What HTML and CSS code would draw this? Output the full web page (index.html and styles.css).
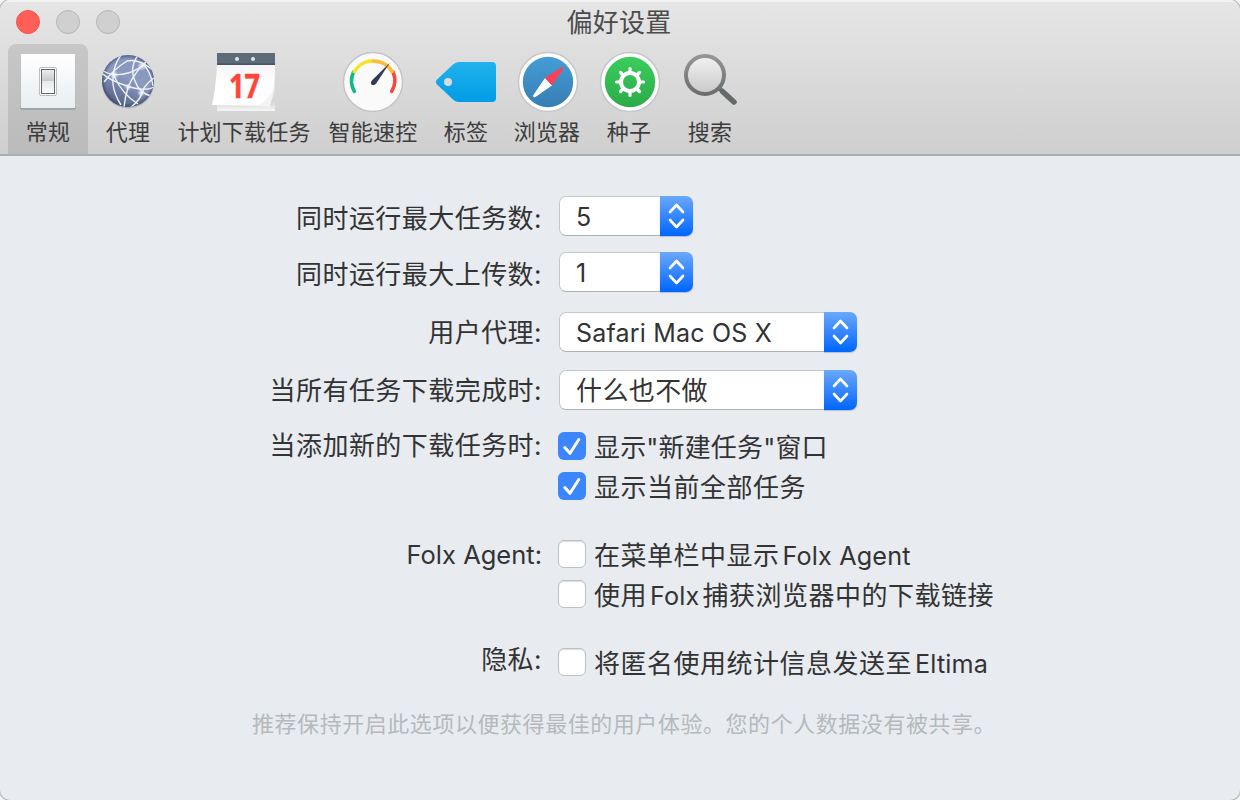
FILE: index.html
```html
<!DOCTYPE html>
<html lang="zh-CN">
<head>
<meta charset="utf-8">
<title>偏好设置</title>
<link rel="stylesheet" href="styles.css">
</head>
<body>
<div class="window">
  <header class="head">
    <div class="titlebar">
      <div class="lights"><i class="light close"></i><i class="light"></i><i class="light"></i></div>
      <h1 class="title">偏好设置</h1>
    </div>
    <nav class="toolbar">
      <div class="tool selected">
        <svg class="icon" width="60" height="60" viewBox="18 52 60 60">
          <defs>
            <linearGradient id="plate" x2="0" y2="1"><stop stop-color="#fff"/><stop offset="1" stop-color="#e9eef1"/></linearGradient>
            <linearGradient id="rocker" x2="0" y2="1"><stop stop-color="#eceeef"/><stop offset=".48" stop-color="#c5cacd"/><stop offset=".5" stop-color="#e6e9eb"/><stop offset="1" stop-color="#fafbfb"/></linearGradient>
          </defs>
          <rect x="20.5" y="55" width="55" height="54.500" rx="1.5" fill="#858a8e"/>
          <rect x="20.7" y="54" width="54.6" height="54.3" rx="1.5" fill="url(#plate)"/>
          <rect x="39.5" y="67.5" width="17" height="28" rx="1.5" fill="#fff" stroke="#bdbdbd"/>
          <rect x="41.5" y="69.5" width="13" height="24" fill="url(#rocker)" stroke="#666" stroke-width="1"/>
        </svg>
        <span class="name">常规</span>
      </div>
      <div class="tool">
        <svg class="icon" width="60" height="60" viewBox="98 52 60 60">
          <defs>
            <linearGradient id="globe" x1=".75" x2=".25" y2="1"><stop stop-color="#8595bd"/><stop offset=".45" stop-color="#8c9abf"/><stop offset="1" stop-color="#4f5d82"/></linearGradient>
            <radialGradient id="rim"><stop offset=".85" stop-color="#2d3a5c" stop-opacity="0"/><stop offset="1" stop-color="#2d3a5c" stop-opacity=".55"/></radialGradient>
            <radialGradient id="spark"><stop stop-color="#fff"/><stop offset="1" stop-color="#dfe9ff" stop-opacity="0"/></radialGradient>
            <clipPath id="ball"><circle cx="128" cy="81" r="26"/></clipPath>
          </defs>
          <ellipse cx="128" cy="82.500" rx="26" ry="26" fill="#a5a7aa" opacity=".7"/>
          <circle cx="128" cy="81" r="26" fill="url(#globe)"/>
          <circle cx="128" cy="81" r="26" fill="url(#rim)"/>
          <g clip-path="url(#ball)" fill="none" stroke="#eef2fa" stroke-width="1.400">
            <path d="M103 71Q114 77 128 73Q139 70 146 62"/>
            <path d="M103 74Q109 80 127 86T154 87"/>
            <path d="M121 55Q112 67 113 84Q114 94 121 105"/>
            <path d="M104 82Q114 69 127 61Q139 58 154 71"/>
            <path d="M138 55Q129 68 135 81Q139 93 151 96"/>
            <path d="M143 64Q151 72 153 86"/>
            <path d="M128 88Q125 97 124 107"/>
            <path d="M128 87Q134 74 142 66"/>
            <path d="M114 76Q123 95 138 104"/>
            <path d="M130 108Q141 100 144 88Q149 81 154 78"/>
          </g>
          <circle cx="114" cy="75" r="5" fill="url(#spark)"/><circle cx="142" cy="66" r="5" fill="url(#spark)"/><circle cx="128" cy="87" r="4" fill="url(#spark)"/><circle cx="141" cy="93" r="4" fill="url(#spark)"/>
        </svg>
        <span class="name">代理</span>
      </div>
      <div class="tool w152">
        <svg class="icon" width="64" height="60" viewBox="212 52 64 60">
          <defs>
            <linearGradient id="page" x2="0" y2="1"><stop stop-color="#f4f4f4"/><stop offset=".4" stop-color="#fefefe"/><stop offset="1" stop-color="#fff"/></linearGradient>
            <linearGradient id="under" x2="0" y2="1"><stop stop-color="#efefef"/><stop offset=".8" stop-color="#d5d5d5"/><stop offset="1" stop-color="#f7f7f7"/></linearGradient>
          </defs>
          <path d="M217 64H275V111H217Z" fill="url(#under)"/>
          <path d="M217 64H275Q275 94 269 107Q267 105 212 105Q216 87 217 64Z" fill="url(#page)"/>
          <path d="M275 85Q273 98 269 107Q267 105 258 105Q269 101 275 85Z" fill="#f3f3f3"/>
          <rect x="217" y="53" width="58" height="12" fill="#5d6b78"/>
          <rect x="217" y="63.5" width="58" height="1.3" fill="#414e65"/>
          <circle cx="237" cy="59" r="2" fill="#e4e5e6"/><circle cx="253" cy="59" r="2" fill="#e4e5e6"/>
          <text class="day" x="229" y="98" textLength="31" lengthAdjust="spacingAndGlyphs">17</text>
        </svg>
        <span class="name">计划下载任务</span>
      </div>
      <div class="tool w106">
        <svg class="icon round" width="62" height="62" viewBox="342 51 62 62">
          <circle cx="373" cy="82" r="29.5" fill="#fafafa" stroke="#c4c4c4" stroke-width="1.4"/>
          <g fill="none" stroke-width="3.6">
            <path d="M354.3 91.4A21.5 21.5 0 0 1 353.4 72.2" stroke="#10b98a" stroke-linecap="round"/>
            <path d="M391.7 91.4A21.5 21.5 0 0 0 393.2 72.2" stroke="#fb463c" stroke-linecap="round"/>
            <path d="M353.7 73A21.2 21.2 0 0 1 372 61" stroke="#f7e421"/>
            <path d="M372 61A21.2 21.2 0 0 1 392.7 73" stroke="#fdbb30"/>
          </g>
          <path d="M390 62.5L376 83.8Q373.4 86.3 371.4 84.4Q370 82.6 372.4 80Z" fill="#313e52"/>
        </svg>
        <span class="name">智能速控</span>
      </div>
      <div class="tool">
        <svg class="icon" width="62" height="60" viewBox="435 52 62 60">
          <defs><linearGradient id="tag" x2="0" y2="1"><stop stop-color="#22b2ec"/><stop offset="1" stop-color="#009ce6"/></linearGradient></defs>
          <path fill-rule="evenodd" d="M436.5 80L453 64.5Q455.500 62 459 62H492Q496 62 496 66V98Q496 102 492 102H459Q455.500 102 453 99.500L436.500 84Q435.200 82 436.500 80ZM452 82A4 4 0 1 0 444 82A4 4 0 1 0 452 82Z" fill="url(#tag)"/>
        </svg>
        <span class="name">标签</span>
      </div>
      <div class="tool w82">
        <svg class="icon round nudge" width="62" height="62" viewBox="517 51 62 62">
          <defs><linearGradient id="sky" x2="0" y2="1"><stop stop-color="#459dd5"/><stop offset="1" stop-color="#367eb4"/></linearGradient></defs>
          <circle cx="548" cy="82" r="29.5" fill="#fff" stroke="#c6c8ca" stroke-width="1.5"/>
          <circle cx="548" cy="82" r="25.2" fill="url(#sky)"/>
          <path d="M545 78L533.200 95.300Q532.500 98.200 535.400 97L552 85.500Z" fill="#fff"/>
          <path d="M545 78L561.500 67.200Q564.300 66.200 563.200 69L552 85.500Z" fill="#fe4056"/>
        </svg>
        <span class="name">浏览器</span>
      </div>
      <div class="tool w82">
        <svg class="icon round nudge" width="62" height="62" viewBox="599 51 62 62">
          <defs><linearGradient id="leaf" x2="0" y2="1"><stop stop-color="#3bcd5d"/><stop offset="1" stop-color="#2bab48"/></linearGradient></defs>
          <circle cx="630" cy="82" r="29.500" fill="#fff" stroke="#c6c8c7" stroke-width="1.500"/>
          <circle cx="630" cy="82" r="25.200" fill="url(#leaf)"/>
          <g fill="none" stroke="#fff">
            <circle cx="630" cy="82" r="9" stroke-width="4"/>
            <path d="M630 72V68.500M630 92V95.500M620 82H616.500M640 82H643.500M623 75L620.500 72.500M637 75L639.500 72.500M623 89L620.500 91.500M637 89L639.500 91.500" stroke-width="3.200" stroke-linecap="round"/>
          </g>
        </svg>
        <span class="name">种子</span>
      </div>
      <div class="tool">
        <svg class="icon" width="60" height="60" viewBox="680 52 60 60">
          <defs>
            <linearGradient id="lens" x2="0" y2="1"><stop stop-color="#f2f2f2"/><stop offset="1" stop-color="#c8c8c8"/></linearGradient>
            <linearGradient id="ring" x2="0" y2="1"><stop stop-color="#949494"/><stop offset="1" stop-color="#6b6d6f"/></linearGradient>
          </defs>
          <path d="M719.500 88.500L734.500 102.500" stroke="#66696b" stroke-width="4"/>
          <path d="M722.500 91.500L734 102" stroke="#66696b" stroke-width="5.500" stroke-linecap="round"/>
          <circle cx="705" cy="75" r="19" fill="url(#lens)" stroke="url(#ring)" stroke-width="4"/>
        </svg>
        <span class="name">搜索</span>
      </div>
    </nav>
  </header>

  <main class="form">
    <div class="row">
      <label class="label low">同时运行最大任务数:</label>
      <div class="select narrow"><span class="value">5</span><span class="arrows"><svg width="33" height="40" viewBox="0 0 33 40"><path class="chev" d="M10 16L16.500 9L23 16M10 24L16.500 31L23 24"/></svg></span></div>
    </div>
    <div class="row g16">
      <label class="label low">同时运行最大上传数:</label>
      <div class="select narrow"><span class="value">1</span><span class="arrows"><svg width="33" height="40" viewBox="0 0 33 40"><path class="chev" d="M10 16L16.500 9L23 16M10 24L16.500 31L23 24"/></svg></span></div>
    </div>
    <div class="row g20">
      <label class="label">用户代理:</label>
      <div class="select"><span class="value agent">Safari Mac OS X</span><span class="arrows"><svg width="33" height="40" viewBox="0 0 33 40"><path class="chev" d="M10 16L16.500 9L23 16M10 24L16.500 31L23 24"/></svg></span></div>
    </div>
    <div class="row g18">
      <label class="label">当所有任务下载完成时:</label>
      <div class="select"><span class="value zh">什么也不做</span><span class="arrows"><svg width="33" height="40" viewBox="0 0 33 40"><path class="chev" d="M10 16L16.500 9L23 16M10 24L16.500 31L23 24"/></svg></span></div>
    </div>
    <div class="row short g22">
      <label class="label high">当添加新的下载任务时:</label>
      <div class="option"><span class="box on"><svg width="28" height="28" viewBox="0 0 28 28"><path class="tick" d="M6.800 15.500L12 21.300L20.800 7.500"/></svg></span><span class="text tight">显示"新建任务"窗口</span></div>
    </div>
    <div class="row short g12">
      <span></span>
      <div class="option"><span class="box on"><svg width="28" height="28" viewBox="0 0 28 28"><path class="tick" d="M6.800 15.500L12 21.300L20.800 7.500"/></svg></span><span class="text">显示当前全部任务</span></div>
    </div>
    <div class="row short g40">
      <label class="label latin">Folx Agent:</label>
      <div class="option"><span class="box"></span><span class="text">在菜单栏中显示<span class="word">Folx Agent</span></span></div>
    </div>
    <div class="row short g12">
      <span></span>
      <div class="option"><span class="box"></span><span class="text">使用<span class="word">Folx</span><span class="after">捕获浏览器中的下载链接</span></span></div>
    </div>
    <div class="row short g40">
      <label class="label higher">隐私:</label>
      <div class="option"><span class="box"></span><span class="text">将匿名使用统计信息发送至<span class="word">Eltima</span></span></div>
    </div>
    <p class="note">推荐保持开启此选项以便获得最佳的用户体验。您的个人数据没有被共享。</p>
  </main>
</div>
</body>
</html>
```
FILE: styles.css
```css
* { box-sizing: border-box; }
body {
  margin: 0;
  background: #f4f5f6;
  color: #333;
  font-family: Inter, "Noto Sans CJK SC", sans-serif;
}
.window {
  width: 1240px;
  height: 800px;
  overflow: hidden;
  border-radius: 10px;
  background: #e8ecf1;
  box-shadow: 0 0 0 1px #b5b5b5;
}
.head {
  height: 156px;
  border-bottom: 2px solid #abadb0;
  background: linear-gradient(#e6e6e6, #cfcfcf);
  box-shadow: inset 0 2px 0 #f3f3f3;
}
.titlebar {
  display: grid;
  grid-template-columns: 1fr auto 1fr;
  height: 44px;
  align-items: center;
}
.lights { display: flex; gap: 16px; padding-left: 16px; }
.light {
  width: 24px;
  height: 24px;
  border: 1px solid #b4b4b4;
  border-radius: 50%;
  background: #d0d0d0;
}
.close { background: #ff5f57; border-color: #f2564e; }
.title {
  margin: 2px 2px 0 0;
  font-size: 26px;
  line-height: 32px;
  font-weight: 400;
  letter-spacing: .3px;
  color: #4b4b4b;
}
.toolbar { display: flex; height: 110px; padding-left: 8px; }
.tool {
  display: flex;
  flex-direction: column;
  align-items: center;
  width: 80px;
  padding-top: 8px;
}
.selected { background: linear-gradient(#c7c7c7, #bbb); border-radius: 8px 8px 0 0; }
.w152 { width: 152px; }
.w106 { width: 106px; }
.w82 { width: 82px; }
.icon { flex: none; height: 60px; overflow: visible; }
.round { height: 62px; margin: -1px 0; }
.nudge { margin-left: 2px; }
.name {
  margin-top: 6px;
  font-size: 22px;
  line-height: 28px;
  letter-spacing: .2px;
  white-space: nowrap;
  color: #3c3c3c;
}
.day { font: 700 34px "Open Sans", sans-serif; fill: #ff453a; stroke: #ff453a; stroke-width: .5px; }
.form { padding-top: 40px; font-size: 26px; }
.row {
  display: grid;
  grid-template-columns: 542px 1fr;
  column-gap: 16px;
  height: 40px;
}
.short { height: 28px; }
.g12 { margin-top: 12px; }
.g16 { margin-top: 16px; }
.g18 { margin-top: 18px; }
.g20 { margin-top: 20px; }
.g22 { margin-top: 22px; }
.g40 { margin-top: 40px; }
.label {
  padding-top: 1px;
  text-align: right;
  line-height: 40px;
  letter-spacing: .45px;
  white-space: nowrap;
}
.low { padding-top: 3px; }
.high { padding-top: 0; line-height: 28px; }
.latin { padding-top: 1px; line-height: 28px; font-size: 25.5px; letter-spacing: 0; }
.higher { padding-top: 0; line-height: 24px; }
.select {
  display: flex;
  width: 299px;
  height: 40px;
}
.narrow { width: 135px; }
.value {
  flex: 1;
  height: 40px;
  margin-left: 1px;
  padding-left: 16px;
  border: 1px solid #c6c9cc;
  border-right: 0;
  border-bottom-color: #afb2b5;
  border-radius: 7px 0 0 7px;
  background: #fff;
  font-size: 25px;
  line-height: 40px;
  white-space: nowrap;
}
.agent { letter-spacing: .2px; }
.zh { font-size: 26px; letter-spacing: .4px; }
.arrows {
  flex: none;
  width: 33px;
  height: 40px;
  border-radius: 0 7px 7px 0;
  background: linear-gradient(#6aa8fb, #0066fe);
  box-shadow: 0 1px 1px #b4bfd2;
}
.arrows svg, .box svg { display: block; }
.chev { fill: none; stroke: #fff; stroke-width: 2.6; stroke-linecap: round; stroke-linejoin: round; }
.option { display: flex; align-items: flex-start; gap: 8px; height: 28px; }
.box {
  flex: none;
  width: 28px;
  height: 28px;
  border: 1px solid #bec0c3;
  border-radius: 6px;
  background: #fff;
  box-shadow: inset 0 1px 1px #ddd;
}
.on { border: 0; background: #3b86fc; box-shadow: none; }
.tick { fill: none; stroke: #fff; stroke-width: 3; stroke-linecap: round; stroke-linejoin: round; }
.text { padding-top: 2px; line-height: 28px; letter-spacing: .5px; white-space: nowrap; }
.tight { letter-spacing: .15px; }
.word { margin-left: 3px; font-size: 25.2px; letter-spacing: .15px; }
.after { margin-left: 3px; }
.note {
  margin: 32px 0 0 252px;
  font-size: 22px;
  line-height: 32px;
  letter-spacing: .55px;
  white-space: nowrap;
  color: #b5b9bc;
}
```
